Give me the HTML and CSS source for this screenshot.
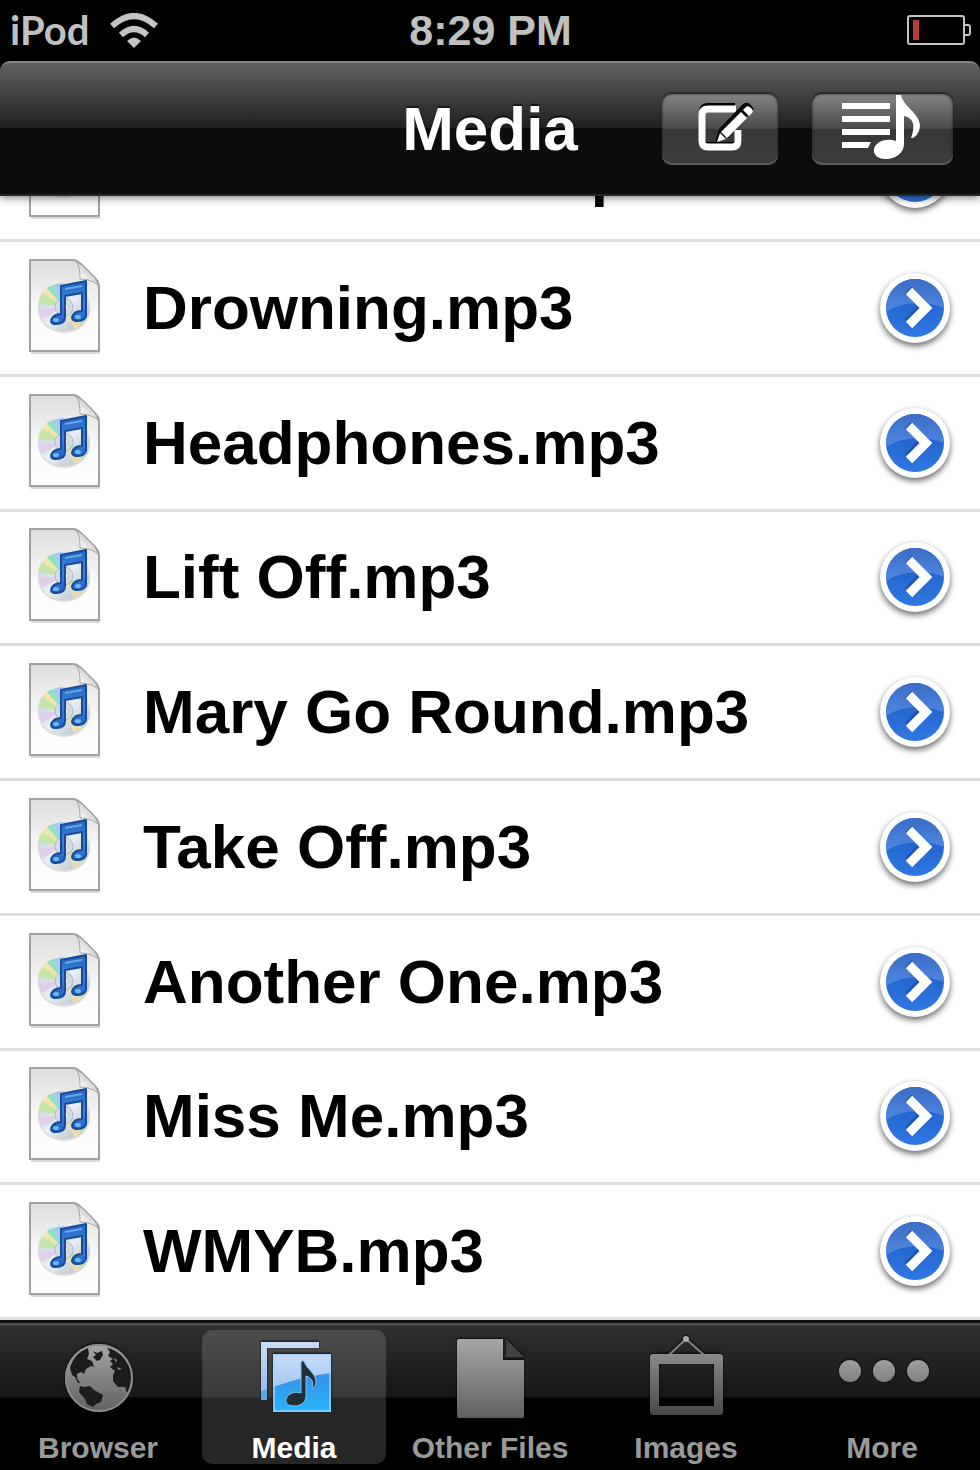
FILE: index.html
```
<!DOCTYPE html>
<html lang="en">
<head>
    <meta charset="UTF-8">
    <meta name="viewport" content="width=device-width, initial-scale=1.0">
    <title>Media</title>
    <link rel="stylesheet" href="styles.css">
</head>
<body>
    <!-- shared icons -->
    <svg class="defs" width="0" height="0" aria-hidden="true">
        <defs>
            <linearGradient id="paper" x1="0" y1="0" x2="0" y2="1">
                <stop offset="0" stop-color="#dedede"/>
                <stop offset="0.6" stop-color="#fafafa"/>
                <stop offset="1" stop-color="#ffffff"/>
            </linearGradient>
            <linearGradient id="curl" x1="0" y1="1" x2="1" y2="0">
                <stop offset="0" stop-color="#dddddd"/>
                <stop offset="0.25" stop-color="#ffffff"/>
                <stop offset="0.6" stop-color="#d0d0d0"/>
            </linearGradient>
            <linearGradient id="disc" x1="0" y1="0" x2="1" y2="1">
                <stop offset="0" stop-color="#b5c5d3"/>
                <stop offset="0.5" stop-color="#e9eff2"/>
                <stop offset="1" stop-color="#aeb9c4"/>
            </linearGradient>
            <linearGradient id="blueNote" x1="0" y1="0" x2="0" y2="1">
                <stop offset="0" stop-color="#2767bd"/>
                <stop offset="0.5" stop-color="#3c82dc"/>
                <stop offset="1" stop-color="#2060c4"/>
            </linearGradient>
            <linearGradient id="gloss" x1="0" y1="0" x2="0" y2="1">
                <stop offset="0" stop-color="#3a6dc6"/>
                <stop offset="1" stop-color="#4f88e2"/>
            </linearGradient>
            <linearGradient id="shine" x1="0" y1="0" x2="0" y2="1">
                <stop offset="0" stop-color="#1c58bd"/>
                <stop offset="1" stop-color="#2f78e4"/>
            </linearGradient>
            <linearGradient id="grey" x1="0" y1="0" x2="0" y2="1">
                <stop offset="0" stop-color="#a6a6a6"/>
                <stop offset="1" stop-color="#606060"/>
            </linearGradient>
            <linearGradient id="dot" x1="0" y1="0" x2="0" y2="1">
                <stop offset="0" stop-color="#a0a0a0"/>
                <stop offset="1" stop-color="#808080"/>
            </linearGradient>
            <linearGradient id="darkGrey" x1="0" y1="0" x2="0" y2="1">
                <stop offset="0" stop-color="#8a8a8a"/>
                <stop offset="1" stop-color="#484848"/>
            </linearGradient>
            <linearGradient id="paleBlue" x1="0" y1="0" x2="0" y2="1">
                <stop offset="0" stop-color="#c9dcf8"/>
                <stop offset="1" stop-color="#8bb8ee"/>
            </linearGradient>
            <linearGradient id="brightBlue" x1="0" y1="0" x2="0" y2="1">
                <stop offset="0" stop-color="#3c90e6"/>
                <stop offset="1" stop-color="#25b4fa"/>
            </linearGradient>
        </defs>

        <symbol id="file" viewBox="0 0 74 98">
            <path d="M2 94H71" stroke="#000" stroke-opacity="0.15" stroke-width="2"/>
            <path d="M1 1H44C48 1 50 3 53 6L66 19C69 22 70 24 70 28V92H1Z" fill="url(#paper)" stroke="#a2a2a2" stroke-width="2"/>
            <ellipse cx="35" cy="51" rx="26" ry="23" fill="#000" fill-opacity="0.12"/>
            <ellipse cx="35" cy="48" rx="26" ry="24" fill="url(#disc)"/>
            <path d="M35 48L9 44Q10 38 13 34Z" fill="#c5e6a8"/>
            <path d="M35 48L13 34Q15 31 18 29Z" fill="#f2e6ac"/>
            <path d="M35 48L18 29Q21 27 25 26Z" fill="#8fe0c4"/>
            <path d="M35 48L25 26Q29 24 34 24Z" fill="#a9c9ef"/>
            <path d="M35 48L9 50Q10 56 13 60Z" fill="#dfcfeb"/>
            <path d="M35 48L53 65Q57 62 59 57Z" fill="#bfe6b4"/>
            <path d="M35 48L45 70Q50 68 53 65Z" fill="#eadcae"/>
            <circle cx="35" cy="48" r="9" fill="#d5dce2" stroke="#adb8c1"/>
            <circle cx="35" cy="48" r="4" fill="#fff" stroke="#c0c8ce"/>
            <path d="M32 27L57 22V54C58 60 53 62 49 62C43 62 42 59 44 56C46 53 49 52 53 52V34L36 37V58C36 64 31 65 27 65C21 65 21 61 24 58C26 56 29 55 32 55Z" fill="url(#blueNote)" stroke="#184b9c" stroke-width="2" stroke-linejoin="round"/>
            <path d="M36 29L53 26V28L36 31Z" fill="#6aa5ed"/>
            <ellipse cx="27" cy="61" rx="3" ry="2" fill="#69b9f5"/>
            <ellipse cx="49" cy="58" rx="3" ry="2" fill="#69b9f5"/>
            <path d="M45 1C50 4 51 10 51 20C58 20 65 22 70 27L66 19L53 6Z" fill="url(#curl)" stroke="#a2a2a2" stroke-linejoin="round"/>
        </symbol>

        <symbol id="disclosure" viewBox="0 0 58 58">
            <circle cx="29" cy="29" r="29" fill="url(#shine)"/>
            <path d="M0 29A29 29 0 0 1 58 29C42 22 16 22 0 33Z" fill="url(#gloss)"/>
            <path d="M22 11L38 27L22 43" fill="none" stroke="#153f94" stroke-opacity="0.5" stroke-width="9"/>
            <path d="M23 12L40 29L23 46" fill="none" stroke="#fff" stroke-width="9"/>
        </symbol>
    </svg>

    <div class="status-bar">
        <div class="carrier">
            <span>iPod</span>
            <svg class="wifi" width="50" height="36" viewBox="0 0 50 36" aria-hidden="true">
                <path d="M3 13Q25 -7 47 13" fill="none" stroke="#c4c4c4" stroke-width="6"/>
                <path d="M12 22Q25 10 38 22" fill="none" stroke="#c4c4c4" stroke-width="6"/>
                <path d="M18 28Q25 21 32 28L25 35Z" fill="#c4c4c4"/>
            </svg>
        </div>
        <time class="clock">8:29 PM</time>
        <svg class="battery" width="65" height="32" viewBox="0 0 65 32" aria-hidden="true">
            <rect x="2" y="2" width="56" height="28" rx="2" fill="none" stroke="#c4c4c4" stroke-width="2"/>
            <path d="M58 11H62Q64 11 64 13V19Q64 21 62 21H58" fill="none" stroke="#c4c4c4" stroke-width="2"/>
            <rect x="7" y="6" width="6" height="20" fill="#b93a36"/>
        </svg>
    </div>

    <header class="nav-bar">
        <h1>Media</h1>
        <div class="nav-actions">
            <button class="nav-button" type="button" aria-label="Edit">
                <svg width="116" height="71" viewBox="0 0 116 71">
                    <path d="M73 12H46Q40 12 40 18V45Q40 51 46 51H71Q77 51 77 45V36" fill="none" stroke="#000" stroke-width="6"/>
                    <path d="M74 15H46Q40 15 40 21V47Q40 53 46 53H70Q76 53 76 47V36" fill="none" stroke="#fff" stroke-width="7"/>
                    <path d="M53 49L57 35L80 11Q84 7 88 10L92 15L66 42Z" fill="#0a0a0a"/>
                    <path d="M55 48L58 39L64 45Z" fill="#fff"/>
                    <path d="M59 38L79 18L85 24L65 44Z" fill="#fff"/>
                    <path d="M81 16L84 13Q86 11 89 14Q92 17 90 19L87 22Z" fill="#fff"/>
                </svg>
            </button>
            <button class="nav-button" type="button" aria-label="Now playing">
                <svg width="141" height="71" viewBox="0 0 141 71">
                    <path d="M30 9H78V15H30ZM30 22H78V28H30ZM30 35H78V41H30ZM30 48H59L56 54H30Z" fill="#fff"/>
                    <path d="M84 1H89C91 12 107 19 108 31C108 37 105 42 101 44H99C103 34 103 24 92 22V50C92 59 83 65 74 65C65 65 61 60 62 55C64 47 75 44 84 47Z" fill="#fff"/>
                </svg>
            </button>
        </div>
    </header>

    <main class="files">
        <ul class="file-list">
            <li class="file">
                <svg class="file-icon" aria-hidden="true"><use href="#file"/></svg>
                <span class="file-name">Another One.mp3</span>
                <button class="disclosure" type="button" aria-label="Details"><svg><use href="#disclosure"/></svg></button>
            </li>
            <li class="file">
                <svg class="file-icon" aria-hidden="true"><use href="#file"/></svg>
                <span class="file-name">Drowning.mp3</span>
                <button class="disclosure" type="button" aria-label="Details for Drowning"><svg><use href="#disclosure"/></svg></button>
            </li>
            <li class="file">
                <svg class="file-icon" aria-hidden="true"><use href="#file"/></svg>
                <span class="file-name">Headphones.mp3</span>
                <button class="disclosure" type="button" aria-label="Details for Headphones"><svg><use href="#disclosure"/></svg></button>
            </li>
            <li class="file">
                <svg class="file-icon" aria-hidden="true"><use href="#file"/></svg>
                <span class="file-name">Lift Off.mp3</span>
                <button class="disclosure" type="button" aria-label="Details for Lift Off"><svg><use href="#disclosure"/></svg></button>
            </li>
            <li class="file">
                <svg class="file-icon" aria-hidden="true"><use href="#file"/></svg>
                <span class="file-name">Mary Go Round.mp3</span>
                <button class="disclosure" type="button" aria-label="Details for Mary Go Round"><svg><use href="#disclosure"/></svg></button>
            </li>
            <li class="file">
                <svg class="file-icon" aria-hidden="true"><use href="#file"/></svg>
                <span class="file-name">Take Off.mp3</span>
                <button class="disclosure" type="button" aria-label="Details for Take Off"><svg><use href="#disclosure"/></svg></button>
            </li>
            <li class="file">
                <svg class="file-icon" aria-hidden="true"><use href="#file"/></svg>
                <span class="file-name">Another One.mp3</span>
                <button class="disclosure" type="button" aria-label="Details for Another One"><svg><use href="#disclosure"/></svg></button>
            </li>
            <li class="file">
                <svg class="file-icon" aria-hidden="true"><use href="#file"/></svg>
                <span class="file-name">Miss Me.mp3</span>
                <button class="disclosure" type="button" aria-label="Details for Miss Me"><svg><use href="#disclosure"/></svg></button>
            </li>
            <li class="file">
                <svg class="file-icon" aria-hidden="true"><use href="#file"/></svg>
                <span class="file-name">WMYB.mp3</span>
                <button class="disclosure" type="button" aria-label="Details for WMYB"><svg><use href="#disclosure"/></svg></button>
            </li>
        </ul>
    </main>

    <nav class="tab-bar">
        <a class="tab" href="#browser">
            <svg class="tab-icon" viewBox="0 0 100 98" aria-hidden="true">
                <circle cx="51" cy="48" r="34" fill="url(#grey)"/>
                <path d="M40 18L34 21C28 25 24 31 22 38L24 45L27 47L30 53L32 53L29 48V44L33 42L36 44L38 39L43 36L46 37L44 31L39 29L41 24Z" fill="#1c1c1c"/>
                <path d="M45 21L49 23L54 21L55 25L52 30L49 31L45 27L48 25Z" fill="#1c1c1c"/>
                <path d="M59 18C70 20 79 29 83 41C84 50 82 58 79 63L77 57L70 57L65 51V45L67 41L62 37L65 34L62 31L65 29L60 26L62 22Z" fill="#1c1c1c"/>
                <path d="M32 56L36 57L42 56L46 60L55 65L53 72L48 74L45 77L39 74L37 69L31 62Z" fill="#1c1c1c"/>
                <path d="M66 28L69 30L68 33ZM69 37L74 39L70 40Z" fill="#808080"/>
                <circle cx="51" cy="48" r="33" fill="none" stroke="#8b8b8b" stroke-width="2"/>
            </svg>
            <span>Browser</span>
        </a>
        <a class="tab active" href="#media" aria-current="page">
            <svg class="tab-icon" viewBox="0 0 100 98" aria-hidden="true">
                <path d="M17 12H75V18H23V70H17Z" fill="url(#paleBlue)"/>
                <path d="M17 61L23 59V70H17Z" fill="#58a9df"/>
                <rect x="29" y="24" width="58" height="58" fill="url(#paleBlue)"/>
                <path d="M29 57Q57 47 87 43V82H29Z" fill="url(#brightBlue)"/>
                <rect x="30" y="25" width="56" height="56" fill="none" stroke="#9bd8ff" stroke-opacity="0.7" stroke-width="2"/>
                <path d="M57 31H60C62 39 72 43 72 52C72 55 70 58 68 59C70 52 68 48 62 46V66C62 72 57 76 50 76C44 76 41 73 42 69C44 63 52 61 57 63Z" fill="#252d35" stroke="#79c4fa"/>
            </svg>
            <span>Media</span>
        </a>
        <a class="tab" href="#other">
            <svg class="tab-icon" viewBox="0 0 100 98" aria-hidden="true">
                <path d="M19 9H63V30H84V86Q84 88 82 88H19Q17 88 17 86V11Q17 9 19 9Z" fill="url(#grey)"/>
                <path d="M66 9L84 27H66Z" fill="#424242"/>
            </svg>
            <span>Other Files</span>
        </a>
        <a class="tab" href="#images">
            <svg class="tab-icon" viewBox="0 0 100 98" aria-hidden="true">
                <path d="M33 25L50 9L68 25" fill="none" stroke="#858585" stroke-width="2"/>
                <circle cx="50" cy="9" r="3" fill="#aaa"/>
                <path fill-rule="evenodd" d="M17 24H84Q87 24 87 27V82Q87 85 84 85H17Q14 85 14 82V27Q14 24 17 24ZM23 34V76H78V34Z" fill="url(#darkGrey)"/>
            </svg>
            <span>Images</span>
        </a>
        <a class="tab" href="#more">
            <svg class="tab-icon" viewBox="0 0 100 98" aria-hidden="true">
                <circle cx="18" cy="41" r="11" fill="url(#dot)"/>
                <circle cx="52" cy="41" r="11" fill="url(#dot)"/>
                <circle cx="86" cy="41" r="11" fill="url(#dot)"/>
            </svg>
            <span>More</span>
        </a>
    </nav>
</body>
</html>
```
FILE: styles.css
```
:root {
    --status-text: #c0c0c0;
    --tab-text: #9a9a9a;
    --separator: #dedede;
}

* {
    box-sizing: border-box;
    margin: 0;
    padding: 0;
}

body {
    font-family: "Liberation Sans", Arial, sans-serif;
    font-weight: bold;
    background-color: #000;
    color: #000;
    min-height: 100vh;
    display: flex;
    flex-direction: column;
    overflow-x: hidden;
}

button {
    border: none;
    cursor: pointer;
}

svg {
    display: block;
}

.defs {
    position: absolute;
}

/* status bar */
.status-bar {
    height: 61px;
    padding: 0 9px 2px 10px;
    display: grid;
    grid-template-columns: 1fr auto 1fr;
    align-items: center;
    color: var(--status-text);
}

.carrier {
    display: flex;
    align-items: center;
    gap: 20px;
    font-family: Lato, "Open Sans", sans-serif;
    font-size: 40px;
    line-height: 52px;
}

.wifi {
    margin-top: 2px;
}

.clock {
    font-size: 43px;
    line-height: 56px;
}

.battery {
    justify-self: end;
}

/* navigation bar */
.nav-bar {
    position: relative;
    z-index: 1;
    height: 135px;
    padding: 2px 27px 0;
    display: grid;
    grid-template-columns: 1fr auto 1fr;
    align-items: center;
    border-top: 2px solid #858585;
    border-bottom: 2px solid #262626;
    border-radius: 10px 10px 0 0;
    background: linear-gradient(#616161, #1f1f1f 50%, #0c0c0c 50%, #0d0d0d);
    box-shadow: 0 2px 8px rgba(0, 0, 0, 0.5);
}

.nav-bar h1 {
    grid-column: 2;
    font-size: 62px;
    line-height: 72px;
    padding-bottom: 2px;
    color: #fff;
    text-shadow: 0 -2px 1px rgba(0, 0, 0, 0.6);
}

.nav-actions {
    display: flex;
    justify-content: flex-end;
    gap: 34px;
}

.nav-button {
    border-radius: 10px;
    background: linear-gradient(#858585, #494949 49%, #373737 50%, #3c3c3c);
    box-shadow: 0 -2px 1px rgba(0, 0, 0, 0.4), inset 0 -2px 1px #606060, inset 0 0 3px rgba(0, 0, 0, 0.6);
}

/* file list, the first row is scrolled under the navigation bar */
.files {
    flex: 1;
    display: grid;
    overflow: hidden;
    background-color: #fff;
}

.file-list {
    list-style: none;
    display: grid;
    grid-template-rows: 46px repeat(8, 1fr);
}

.file {
    display: flex;
    align-items: center;
    padding: 0 30px 0 29px;
    border-bottom: 3px solid var(--separator);
}

.file:first-child {
    height: 135px;
    align-self: end;
}

.file-icon {
    flex: none;
    width: 74px;
    height: 98px;
    margin-right: 40px;
}

.file-name {
    flex: 1;
    font-size: 62px;
    line-height: 72px;
    white-space: nowrap;
}

.disclosure {
    flex: none;
    width: 70px;
    height: 70px;
    padding: 6px;
    border-radius: 50%;
    background-color: #fff;
    box-shadow: 0 3px 6px rgba(0, 0, 0, 0.6);
}

.disclosure svg {
    width: 58px;
    height: 58px;
}

/* tab bar */
.tab-bar {
    height: 150px;
    padding-top: 5px;
    padding-bottom: 6px;
    display: grid;
    grid-template-columns: repeat(5, 1fr);
    border-top: 3px solid #111;
    background: linear-gradient(#505050 2px, #2f2f2f 3px, #161616 74px, #000 75px);
}

.tab {
    margin: 2px 6px 0;
    border-radius: 10px;
    display: flex;
    flex-direction: column;
    align-items: center;
    gap: 4px;
    font-size: 30px;
    line-height: 32px;
    color: var(--tab-text);
    text-decoration: none;
    white-space: nowrap;
}

.tab.active {
    background-color: rgba(255, 255, 255, 0.15);
    color: #fff;
}

.tab-icon {
    flex: none;
    width: 100px;
    height: 98px;
    filter: drop-shadow(0 -1px 1px rgba(0, 0, 0, 0.8));
}
```
